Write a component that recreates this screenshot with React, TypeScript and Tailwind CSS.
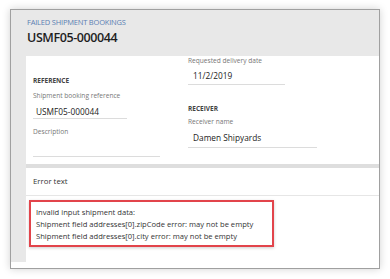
import React from "react";

export default function App() {
  const font = { fontFamily: '"Open Sans", "Noto Sans", sans-serif' };
  return (
    <div className="w-[390px] h-[279px] bg-white pt-[9px] pl-[10px]" style={font}>
      <div className="w-[370px] h-[260px] border border-[#a0a0a0] bg-white shadow-[0_0_8px_rgba(0,0,0,0.18)] flex flex-col">
        {/* header */}
        <div className="h-[46px] bg-[#e8e8e8] pl-[16px] pt-[7px] flex flex-col shrink-0">
          <div className="text-[7.5px] leading-[10px] text-[#5b7fb3] tracking-[-0.2px]">FAILED SHIPMENT BOOKINGS</div>
          <div className="text-[12.5px] leading-[18px] font-semibold text-[#1e1e1e] mt-[2px] tracking-[-0.4px]">USMF05-000044</div>
        </div>
        <div className="flex flex-row h-[206px] shrink-0">
          <div className="w-[15px] bg-[#e8e8e8] shrink-0" />
          <div className="flex-1 flex flex-col">
            {/* form section */}
            <div className="h-[108px] bg-white flex flex-row">
              <div className="w-[157px] pl-[7px] flex flex-col">
                <div className="mt-[20px] h-[10px] leading-[10px] text-[6.5px] font-bold text-[#444]">REFERENCE</div>
                <div className="mt-[5px] h-[10px] leading-[10px] text-[6.6px] text-[#777]">Shipment booking reference</div>
                <div className="mt-[4px] w-[94px] h-[14px] border-b border-[#dcdcdc] pl-[3px] pt-[1px] text-[8.3px] leading-[12px] text-[#222]">USMF05-000044</div>
                <div className="mt-[8px] h-[10px] leading-[10px] text-[6.6px] text-[#777]">Description</div>
                <div className="w-[127px] h-[20px] border-b border-[#dcdcdc]" />
              </div>
              <div className="flex-1 pl-[5px] flex flex-col">
                <div className="h-[10px] leading-[10px] text-[6.6px] text-[#777]">Requested delivery date</div>
                <div className="w-[97px] h-[19px] border-b border-[#dcdcdc] pl-[5px] pt-[3px] text-[8.3px] leading-[13px] text-[#222]">11/2/2019</div>
                <div className="mt-[19px] h-[10px] leading-[10px] text-[6.5px] font-bold text-[#444]">RECEIVER</div>
                <div className="mt-[3px] h-[10px] leading-[10px] text-[6.6px] text-[#777]">Receiver name</div>
                <div className="w-[129px] h-[21px] border-b border-[#dcdcdc] pl-[5px] pt-[4px] text-[8.3px] leading-[13px] text-[#222]">Damen Shipyards</div>
              </div>
            </div>
            {/* gray band */}
            <div className="h-[4px] bg-[#dedede] shrink-0" />
            {/* error section */}
            <div className="flex-1 bg-white flex flex-col">
              <div className="h-[28px] border-b border-[#e6e6e6] pl-[7px] flex items-center text-[7.8px] text-[#333]">Error text</div>
              <div className="ml-[3px] mt-[4px] w-[245px] h-[47px] border-2 border-[#e2444b] shadow-[0_1px_3px_rgba(0,0,0,0.2)] pl-[5px] pt-[4px] text-[7.6px] leading-[12px] text-[#333]">
                <div>Invalid input shipment data:</div>
                <div>Shipment field addresses[0].zipCode error: may not be empty</div>
                <div>Shipment field addresses[0].city error: may not be empty</div>
              </div>
            </div>
          </div>
        </div>
      </div>
    </div>
  );
}
